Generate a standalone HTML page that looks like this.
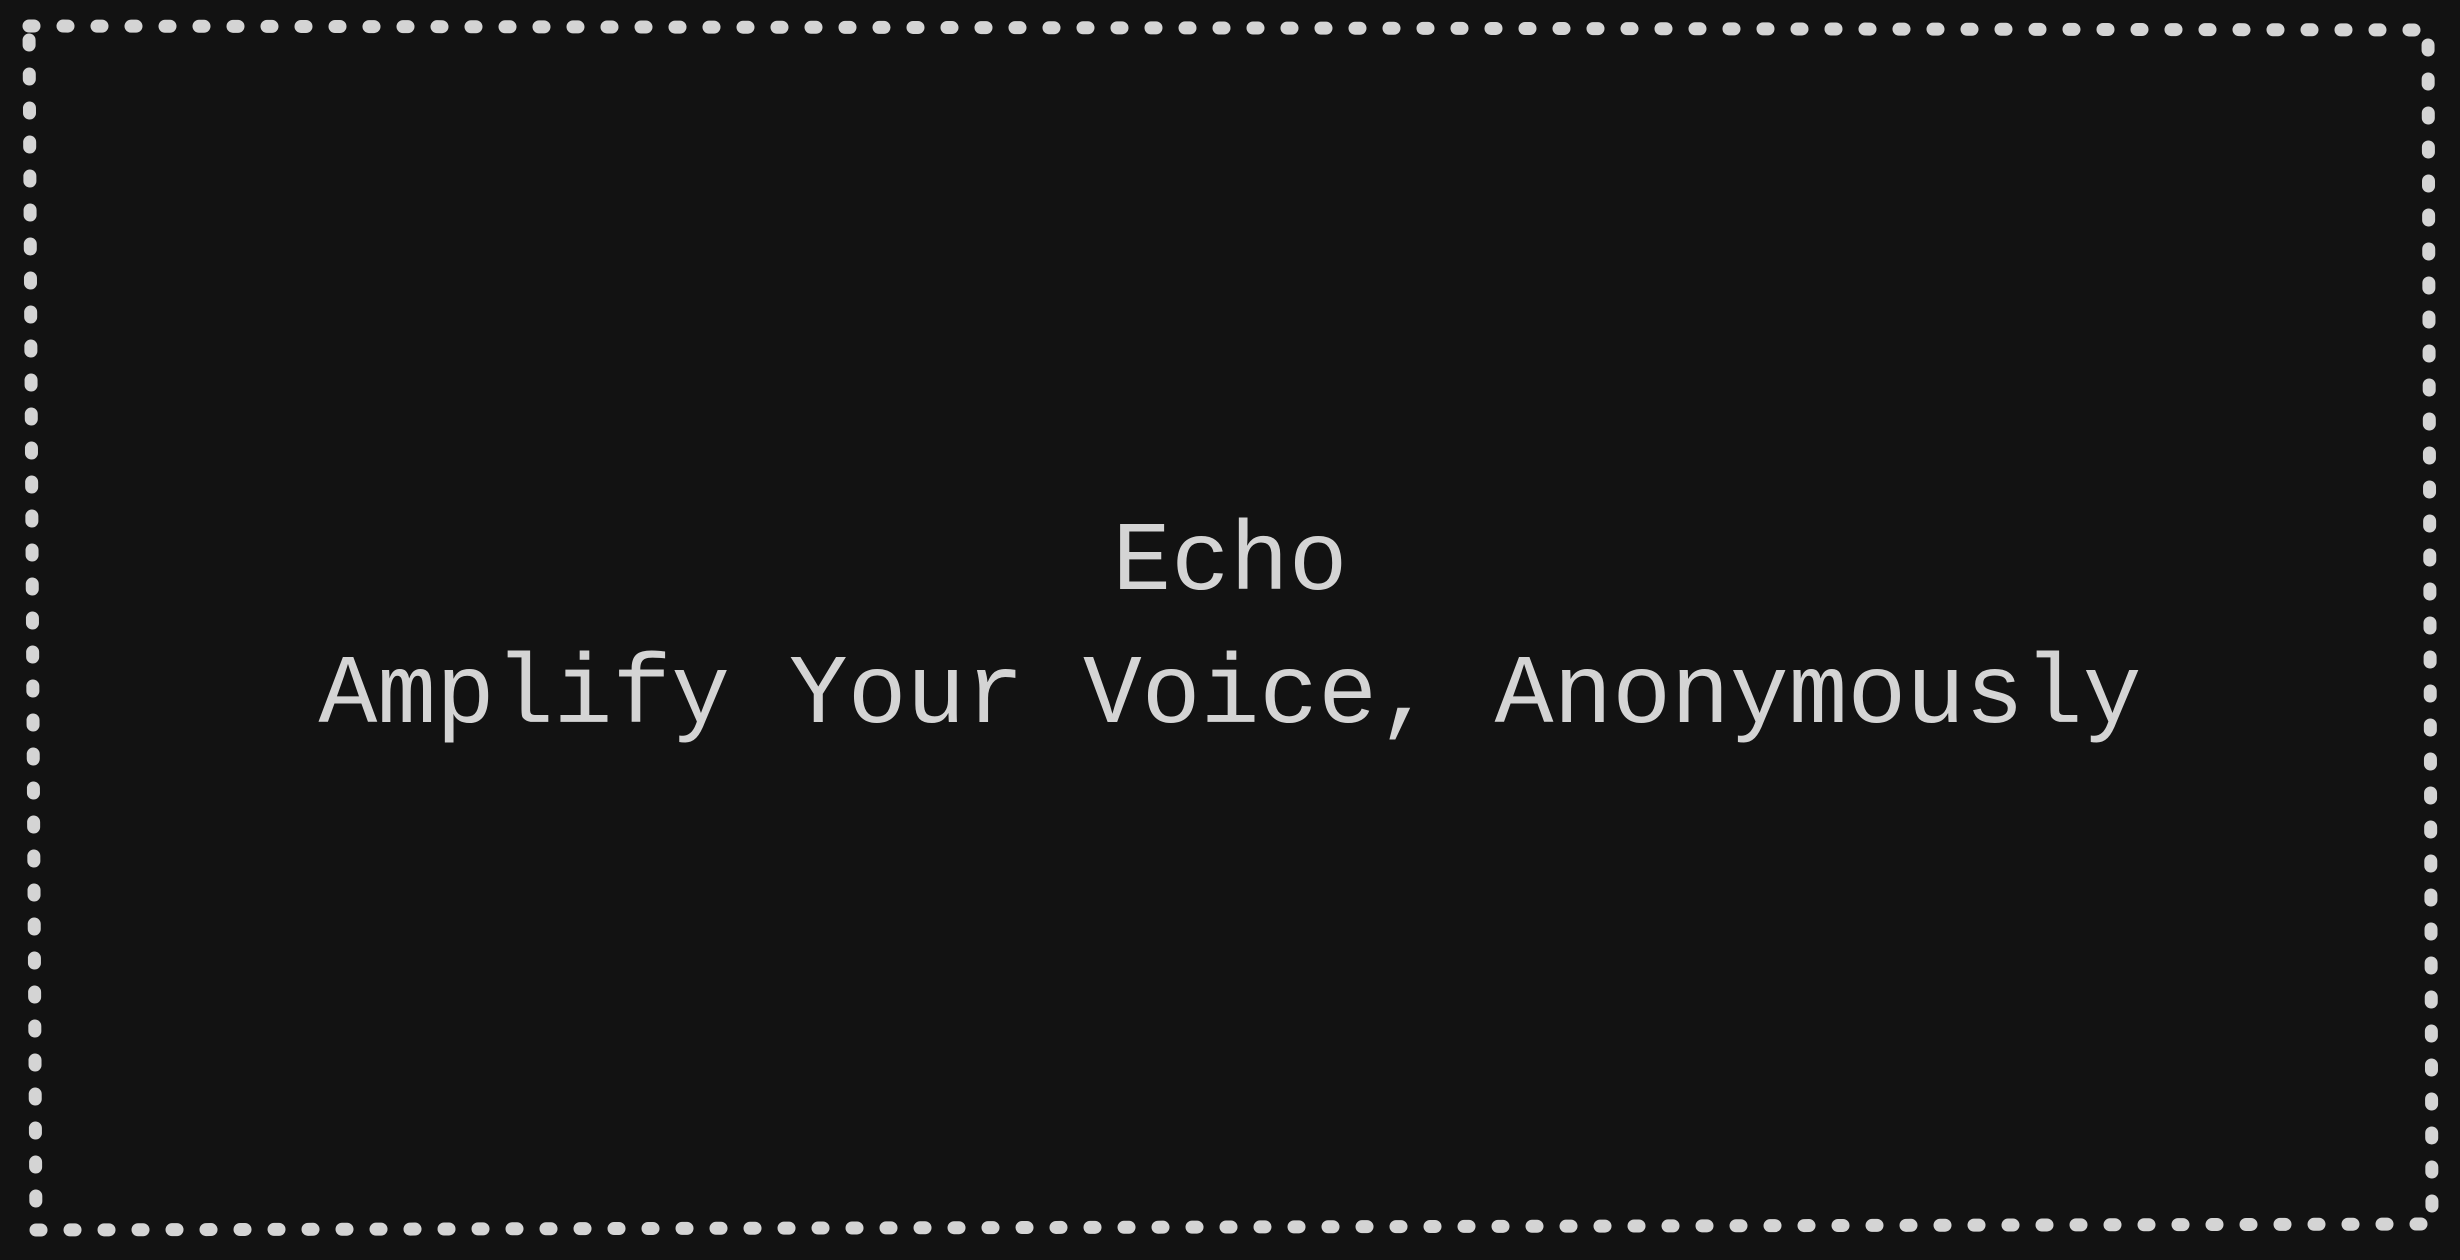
<!DOCTYPE html>
<html><head><meta charset="utf-8"><style>
html,body{margin:0;padding:0;background:#121212;width:2460px;height:1260px;overflow:hidden}
svg{display:block}
text{font-family:"Liberation Mono",monospace;fill:#d4d4d4;font-size:98px}
</style></head><body>
<svg width="2460" height="1260" viewBox="0 0 2460 1260">
<rect width="2460" height="1260" fill="#121212"/>
<path d="M29 26 L2428 30 L2432 1224 L36 1230 Z" fill="none" stroke="#d4d4d4" stroke-width="13" stroke-linecap="round" stroke-dasharray="5 29"/>
<text x="1230" y="589" text-anchor="middle">Echo</text>
<text x="1230" y="722" text-anchor="middle">Amplify Your Voice, Anonymously</text>
</svg>
</body></html>
